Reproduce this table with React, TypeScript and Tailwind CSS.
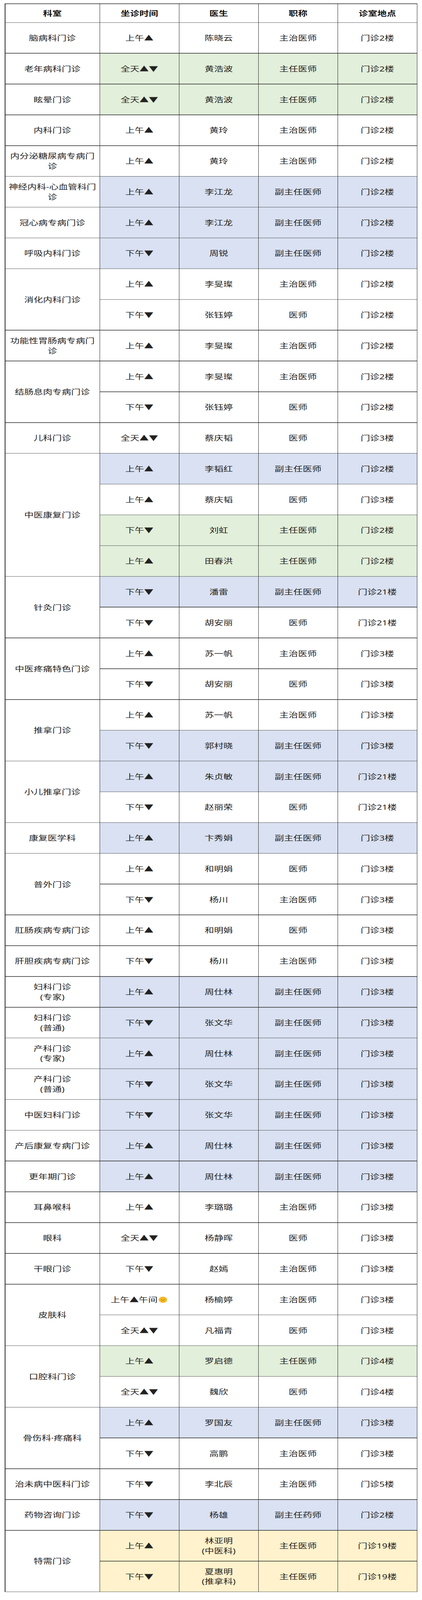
type Slot = {
  time: string
  doctor: string
  title: string
  place: string
  bg?: 'green' | 'blue' | 'yellow'
  sun?: boolean
}

type Group = { dept: string; rows: Slot[] }

const AM = '上午▲'
const PM = '下午▼'
const ALL = '全天▲▼'

const GROUPS: Group[] = [
  { dept: '脑病科门诊', rows: [{ time: AM, doctor: '陈晓云', title: '主治医师', place: '门诊2楼' }] },
  { dept: '老年病科门诊', rows: [{ time: ALL, doctor: '黄浩波', title: '主任医师', place: '门诊2楼', bg: 'green' }] },
  { dept: '眩晕门诊', rows: [{ time: ALL, doctor: '黄浩波', title: '主任医师', place: '门诊2楼', bg: 'green' }] },
  { dept: '内科门诊', rows: [{ time: AM, doctor: '黄玲', title: '主治医师', place: '门诊2楼' }] },
  { dept: '内分泌糖尿病专病门诊', rows: [{ time: AM, doctor: '黄玲', title: '主治医师', place: '门诊2楼' }] },
  { dept: '神经内科-心血管科门诊', rows: [{ time: AM, doctor: '李江龙', title: '副主任医师', place: '门诊2楼', bg: 'blue' }] },
  { dept: '冠心病专病门诊', rows: [{ time: AM, doctor: '李江龙', title: '副主任医师', place: '门诊2楼', bg: 'blue' }] },
  { dept: '呼吸内科门诊', rows: [{ time: PM, doctor: '周锐', title: '副主任医师', place: '门诊2楼', bg: 'blue' }] },
  {
    dept: '消化内科门诊',
    rows: [
      { time: AM, doctor: '李旻璨', title: '主治医师', place: '门诊2楼' },
      { time: PM, doctor: '张钰婷', title: '医师', place: '门诊2楼' },
    ],
  },
  { dept: '功能性胃肠病专病门诊', rows: [{ time: AM, doctor: '李旻璨', title: '主治医师', place: '门诊2楼' }] },
  {
    dept: '结肠息肉专病门诊',
    rows: [
      { time: AM, doctor: '李旻璨', title: '主治医师', place: '门诊2楼' },
      { time: PM, doctor: '张钰婷', title: '医师', place: '门诊2楼' },
    ],
  },
  { dept: '儿科门诊', rows: [{ time: ALL, doctor: '蔡庆韬', title: '医师', place: '门诊3楼' }] },
  {
    dept: '中医康复门诊',
    rows: [
      { time: AM, doctor: '李韬红', title: '副主任医师', place: '门诊2楼', bg: 'blue' },
      { time: AM, doctor: '蔡庆韬', title: '医师', place: '门诊3楼' },
      { time: PM, doctor: '刘虹', title: '主任医师', place: '门诊2楼', bg: 'green' },
      { time: AM, doctor: '田春洪', title: '主任医师', place: '门诊2楼', bg: 'green' },
    ],
  },
  {
    dept: '针灸门诊',
    rows: [
      { time: PM, doctor: '潘雷', title: '副主任医师', place: '门诊21楼', bg: 'blue' },
      { time: PM, doctor: '胡安丽', title: '医师', place: '门诊21楼' },
    ],
  },
  {
    dept: '中医疼痛特色门诊',
    rows: [
      { time: AM, doctor: '苏一帆', title: '主治医师', place: '门诊3楼' },
      { time: PM, doctor: '胡安丽', title: '医师', place: '门诊3楼' },
    ],
  },
  {
    dept: '推拿门诊',
    rows: [
      { time: AM, doctor: '苏一帆', title: '主治医师', place: '门诊3楼' },
      { time: PM, doctor: '郭村晓', title: '副主任医师', place: '门诊3楼', bg: 'blue' },
    ],
  },
  {
    dept: '小儿推拿门诊',
    rows: [
      { time: AM, doctor: '朱贞敏', title: '副主任医师', place: '门诊21楼', bg: 'blue' },
      { time: PM, doctor: '赵丽荣', title: '医师', place: '门诊21楼' },
    ],
  },
  { dept: '康复医学科', rows: [{ time: AM, doctor: '卞秀娟', title: '副主任医师', place: '门诊3楼', bg: 'blue' }] },
  {
    dept: '普外门诊',
    rows: [
      { time: AM, doctor: '和明娟', title: '医师', place: '门诊3楼' },
      { time: PM, doctor: '杨川', title: '主治医师', place: '门诊3楼' },
    ],
  },
  { dept: '肛肠疾病专病门诊', rows: [{ time: AM, doctor: '和明娟', title: '医师', place: '门诊3楼' }] },
  { dept: '肝胆疾病专病门诊', rows: [{ time: PM, doctor: '杨川', title: '主治医师', place: '门诊3楼' }] },
  { dept: '妇科门诊\n(专家)', rows: [{ time: AM, doctor: '周仕林', title: '副主任医师', place: '门诊3楼', bg: 'blue' }] },
  { dept: '妇科门诊\n(普通)', rows: [{ time: PM, doctor: '张文华', title: '副主任医师', place: '门诊3楼', bg: 'blue' }] },
  { dept: '产科门诊\n(专家)', rows: [{ time: AM, doctor: '周仕林', title: '副主任医师', place: '门诊3楼', bg: 'blue' }] },
  { dept: '产科门诊\n(普通)', rows: [{ time: PM, doctor: '张文华', title: '副主任医师', place: '门诊3楼', bg: 'blue' }] },
  { dept: '中医妇科门诊', rows: [{ time: PM, doctor: '张文华', title: '副主任医师', place: '门诊3楼', bg: 'blue' }] },
  { dept: '产后康复专病门诊', rows: [{ time: AM, doctor: '周仕林', title: '副主任医师', place: '门诊3楼', bg: 'blue' }] },
  { dept: '更年期门诊', rows: [{ time: AM, doctor: '周仕林', title: '副主任医师', place: '门诊3楼', bg: 'blue' }] },
  { dept: '耳鼻喉科', rows: [{ time: AM, doctor: '李璐璐', title: '主治医师', place: '门诊3楼' }] },
  { dept: '眼科', rows: [{ time: ALL, doctor: '杨静晖', title: '医师', place: '门诊3楼' }] },
  { dept: '干眼门诊', rows: [{ time: PM, doctor: '赵嫣', title: '主治医师', place: '门诊3楼' }] },
  {
    dept: '皮肤科',
    rows: [
      { time: '上午▲午间', doctor: '杨榆婷', title: '主治医师', place: '门诊3楼', sun: true },
      { time: ALL, doctor: '凡福青', title: '医师', place: '门诊3楼' },
    ],
  },
  {
    dept: '口腔科门诊',
    rows: [
      { time: AM, doctor: '罗启德', title: '主任医师', place: '门诊4楼', bg: 'green' },
      { time: ALL, doctor: '魏欣', title: '医师', place: '门诊4楼' },
    ],
  },
  {
    dept: '骨伤科·疼痛科',
    rows: [
      { time: AM, doctor: '罗国友', title: '副主任医师', place: '门诊3楼', bg: 'blue' },
      { time: PM, doctor: '高鹏', title: '主治医师', place: '门诊3楼' },
    ],
  },
  { dept: '治未病中医科门诊', rows: [{ time: PM, doctor: '李北辰', title: '主治医师', place: '门诊5楼' }] },
  { dept: '药物咨询门诊', rows: [{ time: PM, doctor: '杨雄', title: '副主任药师', place: '门诊2楼', bg: 'blue' }] },
  {
    dept: '特需门诊',
    rows: [
      { time: AM, doctor: '林亚明\n(中医科)', title: '主任医师', place: '门诊19楼', bg: 'yellow' },
      { time: PM, doctor: '夏惠明\n(推拿科)', title: '主任医师', place: '门诊19楼', bg: 'yellow' },
    ],
  },
]

const BG = {
  green: 'bg-[#e2efda]',
  blue: 'bg-[#d9e1f2]',
  yellow: 'bg-[#fff2cc]',
}

const SPAN: Record<number, string> = {
  1: 'row-span-1',
  2: 'row-span-2',
  4: 'row-span-4',
}

const PAGE_H = 5558

const Sun = () => (
  <svg viewBox="0 0 24 24" className="inline-block w-[26px] h-[26px] align-[-4px] ml-[1px]">
    {Array.from({ length: 12 }).map((_, i) => (
      <path key={i} d="M12 0.5 L14 4.8 L10 4.8 Z" fill="#f0a800" transform={`rotate(${i * 30} 12 12)`} />
    ))}
    <circle cx="12" cy="12" r="7.8" fill="#fcc21b" stroke="#d98a00" strokeWidth="0.9" />
    <circle cx="9.5" cy="10.6" r="1" fill="#5a3a00" />
    <circle cx="14.5" cy="10.6" r="1" fill="#5a3a00" />
    <path d="M8.9 13.4 Q12 16.8 15.1 13.4" fill="none" stroke="#5a3a00" strokeWidth="1" strokeLinecap="round" />
  </svg>
)

const cell = 'flex items-center justify-center text-center whitespace-pre-line px-[4px]'

export default function App() {
  // the page is laid out at the reference's 5558px height; if the window is shorter, squeeze it to fit
  const vh = typeof window !== 'undefined' ? window.innerHeight : PAGE_H
  let k = vh / PAGE_H
  if (!(k >= 0.5 && k <= 1)) k = 1

  return (
    <div className="bg-white w-full h-screen overflow-hidden">
      <div
        className="w-full h-[5558px] origin-top px-[12px] pt-[12px] font-['Noto_Sans','Noto_Sans_CJK_SC',sans-serif] text-[24px] leading-[35px] text-[#222]"
        style={{ transform: `scaleY(${k})` }}
      >
        <div className="grid grid-cols-[241px_repeat(4,minmax(0,1fr))] grid-rows-[64px_repeat(51,105.4px)] gap-[1.5px] p-[1.5px] bg-[#262626]">
          {['科室', '坐诊时间', '医生', '职称', '诊室地点'].map((h) => (
            <div key={h} className={`${cell} bg-white font-bold text-[#111]`}>
              {h}
            </div>
          ))}
          {GROUPS.map((g) =>
            g.rows.map((r, i) => {
              const bg = r.bg ? BG[r.bg] : 'bg-white'
              return [
                i === 0 && (
                  <div key={g.dept} className={`${cell} ${SPAN[g.rows.length]} col-start-1 bg-white`}>
                    {g.dept}
                  </div>
                ),
                <div key={g.dept + i + 't'} className={`${cell} col-start-2 ${bg}`}>
                  <span>
                    {r.time}
                    {r.sun && <Sun />}
                  </span>
                </div>,
                <div key={g.dept + i + 'd'} className={`${cell} ${bg}`}>
                  {r.doctor}
                </div>,
                <div key={g.dept + i + 'p'} className={`${cell} ${bg}`}>
                  {r.title}
                </div>,
                <div key={g.dept + i + 'l'} className={`${cell} ${bg}`}>
                  {r.place}
                </div>,
              ]
            })
          )}
        </div>
      </div>
    </div>
  )
}
